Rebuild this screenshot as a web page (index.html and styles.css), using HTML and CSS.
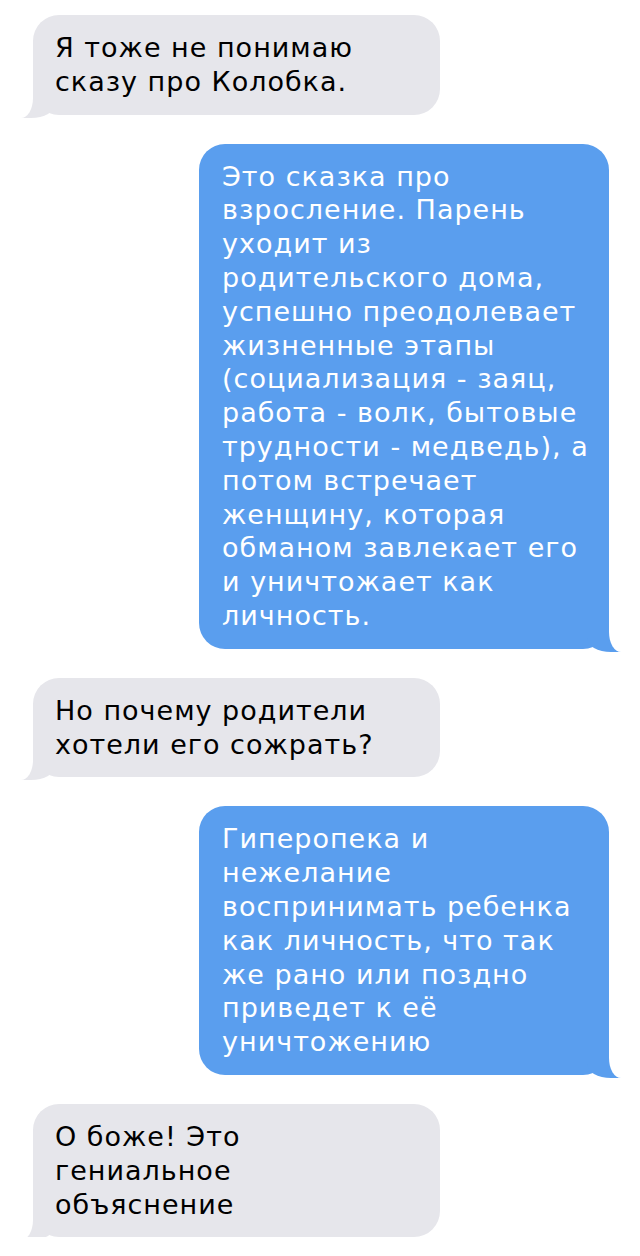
FILE: index.html
```html
<!DOCTYPE html>
<html>
  <head>
    <title>Колобок</title>
    <link rel="stylesheet" href="styles.css">
  </head>
  <body>
    <div class="chat">
      <div class="msg in">Я тоже не понимаю<br>сказу про Колобка.</div>
      <div class="msg out">Это сказка про<br>взросление. Парень<br>уходит из<br>родительского дома,<br>успешно преодолевает<br>жизненные этапы<br>(социализация - заяц,<br>работа - волк, бытовые<br>трудности - медведь), а<br>потом встречает<br>женщину, которая<br>обманом завлекает его<br>и уничтожает как<br>личность.</div>
      <div class="msg in">Но почему родители<br>хотели его сожрать?</div>
      <div class="msg out">Гиперопека и<br>нежелание<br>воспринимать ребенка<br>как личность, что так<br>же рано или поздно<br>приведет к её<br>уничтожению</div>
      <div class="msg in">О боже! Это<br>гениальное<br>объяснение</div>
    </div>
  </body>
</html>
```

FILE: styles.css
```css
body {
  margin: 0;
  background: #fff;
  font-family: "DejaVu Sans", "Liberation Sans", sans-serif;
}
.chat {
  display: flex;
  flex-direction: column;
  gap: 29px;
  padding-top: 15px;
}
.msg {
  position: relative;
  box-sizing: border-box;
  font-size: 27px;
  line-height: 33.8px;
  letter-spacing: 1px;
  padding: 16px 18px 16px 22px;
  border-radius: 26px;
  white-space: nowrap;
}
.msg.in {
  align-self: flex-start;
  margin-left: 33px;
  width: 407px;
  background: #e6e6eb;
  color: #000;
}
.msg.out {
  align-self: flex-end;
  margin-right: 31px;
  width: 410px;
  padding-left: 23px;
  background: #5a9eee;
  color: #fff;
}
/* tails */
.msg::before,
.msg::after {
  content: "";
  position: absolute;
  bottom: -3px;
  height: 30px;
}
.msg.out::before {
  right: -12px;
  width: 34px;
  background: #5a9eee;
  border-bottom-left-radius: 24px 14px;
}
.msg.out::after {
  right: -32px;
  width: 32px;
  background: #fff;
  border-bottom-left-radius: 12px 20px;
}
.msg.in::before {
  left: -12px;
  width: 34px;
  background: #e6e6eb;
  border-bottom-right-radius: 24px 14px;
}
.msg.in::after {
  left: -32px;
  width: 32px;
  background: #fff;
  border-bottom-right-radius: 12px 20px;
}
```
